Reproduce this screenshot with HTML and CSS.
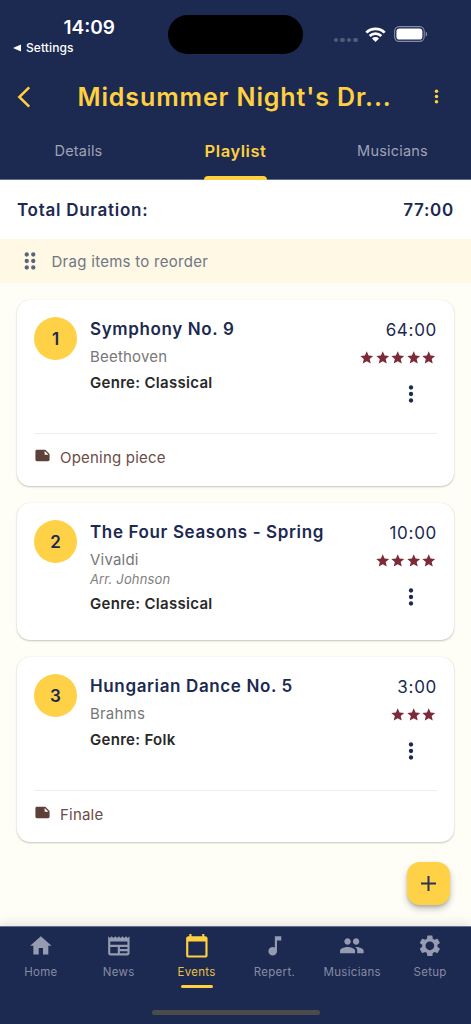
FILE: index.html
```html
<!DOCTYPE html>
<html lang="en">
<head>
<meta charset="utf-8">
<title>Playlist</title>
<link rel="stylesheet" href="styles.css">
</head>
<body>
<svg width="0" height="0" class="defs">
  <symbol id="star" viewBox="0 0 24 24"><path d="M12 17.27L18.18 21l-1.64-7.03L22 9.24l-7.19-.61L12 2 9.19 8.63 2 9.24l5.46 4.73L5.82 21z"/></symbol>
  <symbol id="more" viewBox="0 0 24 24"><circle cx="12" cy="6" r="2"/><circle cx="12" cy="12" r="2"/><circle cx="12" cy="18" r="2"/></symbol>
  <symbol id="note" viewBox="0 0 24 24"><path d="M22 10l-6-6H4c-1.1 0-2 .9-2 2v12.01c0 1.1.9 1.99 2 1.99l16-.01c1.1 0 2-.89 2-1.99v-8zm-7-4.5l5.5 5.5H15V5.5z"/></symbol>
</svg>
<div class="screen">
  <header class="header">
    <div class="status">
      <div class="status-left">
        <div class="clock">14:09</div>
        <div class="return"><svg width="8" height="8" viewBox="0 0 8 8"><path d="M0 4L8 .4v7.2z"/></svg><span>Settings</span></div>
      </div>
      <div class="island"></div>
      <div class="status-right">
        <div class="signal"><i></i><i></i><i></i><i></i></div>
        <svg class="wifi" width="21" height="15" viewBox="0 0 21 15"><g fill="none" stroke="#fff" stroke-width="2.7"><path d="M1.3 5.6a13 13 0 0 1 18.4 0"/><path d="M4.7 9a8.3 8.3 0 0 1 11.6 0"/></g><path fill="#fff" d="M7 11.4a5 5 0 0 1 7 0L10.5 15z"/></svg>
        <svg class="battery" width="34" height="16" viewBox="0 0 34 16"><rect x=".6" y=".6" width="29.6" height="14.8" rx="4.6" fill="none" stroke="#848da6" stroke-width="1.1"/><rect x="2.4" y="2.4" width="26" height="11.2" rx="3.2" fill="#fff"/><path d="M31.6 5.4c2 .8 2 4.4 0 5.2z" fill="#848da6"/></svg>
      </div>
    </div>
    <div class="appbar">
      <svg class="back" width="14" height="22" viewBox="0 0 14 22"><path d="M12.2 1.3L2.3 11l9.9 9.7" fill="none" stroke="#ffd03f" stroke-width="2.5"/></svg>
      <h1 class="title">Midsummer Night's Dr...</h1>
      <svg class="menu" width="21" height="21"><use href="#more"/></svg>
    </div>
    <nav class="tabs">
      <div class="tab">Details</div>
      <div class="tab active"><span>Playlist</span><i class="indicator"></i></div>
      <div class="tab musicians">Musicians</div>
    </nav>
  </header>
  <section class="total"><span class="total-label">Total Duration:</span><span class="total-time">77:00</span></section>
  <section class="hint">
    <svg width="26" height="26" viewBox="0 0 24 24"><circle cx="9" cy="6" r="2"/><circle cx="15" cy="6" r="2"/><circle cx="9" cy="12" r="2"/><circle cx="15" cy="12" r="2"/><circle cx="9" cy="18" r="2"/><circle cx="15" cy="18" r="2"/></svg>
    <span>Drag items to reorder</span>
  </section>
  <main class="list">
    <article class="card tall">
      <div class="row">
        <div class="badge">1</div>
        <div class="info"><h2>Symphony No. 9</h2><p class="composer">Beethoven</p><p class="genre">Genre: Classical</p></div>
        <div class="side"><div class="time">64:00</div><div class="stars"><svg><use href="#star"/></svg><svg><use href="#star"/></svg><svg><use href="#star"/></svg><svg><use href="#star"/></svg><svg><use href="#star"/></svg></div><svg class="more"><use href="#more"/></svg></div>
      </div>
      <div class="note"><svg><use href="#note"/></svg><span>Opening piece</span></div>
    </article>
    <article class="card short">
      <div class="row">
        <div class="badge">2</div>
        <div class="info"><h2>The Four Seasons - Spring</h2><p class="composer">Vivaldi</p><p class="arranger">Arr. Johnson</p><p class="genre">Genre: Classical</p></div>
        <div class="side"><div class="time">10:00</div><div class="stars"><svg><use href="#star"/></svg><svg><use href="#star"/></svg><svg><use href="#star"/></svg><svg><use href="#star"/></svg></div><svg class="more"><use href="#more"/></svg></div>
      </div>
    </article>
    <article class="card tall">
      <div class="row">
        <div class="badge">3</div>
        <div class="info"><h2>Hungarian Dance No. 5</h2><p class="composer">Brahms</p><p class="genre">Genre: Folk</p></div>
        <div class="side"><div class="time">3:00</div><div class="stars"><svg><use href="#star"/></svg><svg><use href="#star"/></svg><svg><use href="#star"/></svg></div><svg class="more"><use href="#more"/></svg></div>
      </div>
      <div class="note"><svg><use href="#note"/></svg><span>Finale</span></div>
    </article>
  </main>
  <button class="fab" aria-label="Add"><svg width="15" height="15" viewBox="0 0 15 15"><path d="M7.5 0v15M0 7.5h15" stroke="#2c3350" stroke-width="2"/></svg></button>
  <footer class="bottom">
    <nav class="nav">
      <div class="item"><svg viewBox="0 0 24 24"><path d="M10 20v-6h4v6h5v-8h3L12 3 2 12h3v8z"/></svg><span>Home</span></div>
      <div class="item"><svg viewBox="0 0 24 24"><path d="M22 3l-1.67 1.67L18.67 3 17 4.67 15.33 3l-1.66 1.67L12 3l-1.67 1.67L8.67 3 7 4.67 5.33 3 3.67 4.67 2 3v16c0 1.1.9 2 2 2h16c1.1 0 2-.9 2-2V3zM11 19H4v-6h7v6zm9 0h-7v-2h7v2zm0-4h-7v-2h7v2zm0-4H4V8h16v3z"/></svg><span>News</span></div>
      <div class="item selected"><svg viewBox="0 0 24 24"><path d="M20 3h-1V1h-2v2H7V1H5v2H4c-1.1 0-2 .9-2 2v16c0 1.1.9 2 2 2h16c1.1 0 2-.9 2-2V5c0-1.1-.9-2-2-2zm0 18H4V8h16v13z"/></svg><span>Events</span><i class="bar"></i></div>
      <div class="item"><svg viewBox="0 0 24 24"><path d="M12 3v10.55c-.59-.34-1.27-.55-2-.55-2.21 0-4 1.79-4 4s1.79 4 4 4 4-1.79 4-4V7h4V3h-6z"/></svg><span>Repert.</span></div>
      <div class="item"><svg viewBox="0 0 24 24"><path d="M16 11c1.66 0 2.99-1.34 2.99-3S17.66 5 16 5c-1.66 0-3 1.34-3 3s1.34 3 3 3zm-8 0c1.66 0 2.99-1.34 2.99-3S9.66 5 8 5C6.34 5 5 6.34 5 8s1.34 3 3 3zm0 2c-2.33 0-7 1.17-7 3.5V19h14v-2.5c0-2.33-4.67-3.5-7-3.5zm8 0c-.29 0-.62.02-.97.05 1.16.84 1.97 1.97 1.97 3.45V19h6v-2.5c0-2.33-4.67-3.5-7-3.5z"/></svg><span>Musicians</span></div>
      <div class="item"><svg viewBox="0 0 24 24"><path d="M19.14 12.94c.04-.3.06-.61.06-.94 0-.32-.02-.64-.07-.94l2.03-1.58c.18-.14.23-.41.12-.61l-1.92-3.32c-.12-.22-.37-.29-.59-.22l-2.39.96c-.5-.38-1.03-.7-1.62-.94l-.36-2.54c-.04-.24-.24-.41-.48-.41h-3.84c-.24 0-.43.17-.47.41l-.36 2.54c-.59.24-1.13.57-1.62.94l-2.39-.96c-.22-.08-.47 0-.59.22L2.74 8.87c-.12.21-.08.47.12.61l2.03 1.58c-.05.3-.09.63-.09.94s.02.64.07.94l-2.03 1.58c-.18.14-.23.41-.12.61l1.92 3.32c.12.22.37.29.59.22l2.39-.96c.5.38 1.03.7 1.62.94l.36 2.54c.05.24.24.41.48.41h3.84c.24 0 .44-.17.47-.41l.36-2.54c.59-.24 1.13-.56 1.62-.94l2.39.96c.22.08.47 0 .59-.22l1.92-3.32c.12-.22.07-.47-.12-.61l-2.01-1.58zM12 16.1c-2.26 0-4.1-1.84-4.1-4.1s1.84-4.1 4.1-4.1 4.1 1.84 4.1 4.1-1.84 4.1-4.1 4.1z"/></svg><span>Setup</span></div>
    </nav>
    <div class="home-bar"></div>
  </footer>
</div>
</body>
</html>
```

FILE: styles.css
```css
* { box-sizing: border-box; margin: 0; padding: 0; }
body { font-family: Inter, "Liberation Sans", sans-serif; background: #fffef6; color: #1c2951; }
.defs { position: absolute; }
svg { display: block; flex: none; }
.screen { width: 471px; height: 1024px; display: flex; flex-direction: column; position: relative; overflow: hidden; }

.header { height: 180px; flex: none; background: linear-gradient(#1c2951 179px, #646d8b 179px); display: flex; flex-direction: column; }
.status { height: 69px; flex: none; display: grid; grid-template-columns: 168px 135px 1fr; color: #fff; }
.status-left { padding-top: 15px; }
.clock { font-size: 19px; line-height: 25px; font-weight: 600; padding-left: 63.5px; letter-spacing: 0; }
.return { display: flex; align-items: center; gap: 5px; padding-left: 13px; font-size: 12px; line-height: 15px; font-weight: 500; letter-spacing: .1px; }
.return path { fill: #fff; }
.island { height: 39px; margin-top: 15px; border-radius: 20px; background: #000; }
.status-right { display: flex; align-items: flex-start; padding: 26px 0 0 31px; }
.signal { display: flex; gap: 2.3px; padding-top: 12px; margin-right: 7px; }
.signal i { width: 4.2px; height: 4.2px; border-radius: 50%; background: #525c7c; }
.wifi { margin-top: 1px; margin-right: 8px; }
.appbar { height: 55px; flex: none; display: flex; align-items: center; padding: 0 24px 0 17px; }
.back { margin-right: 46.5px; }
.title { flex: 1; font-size: 25px; line-height: 32px; font-weight: 600; color: #ffd03f; letter-spacing: .88px; white-space: nowrap; }
.menu { fill: #ffd03f; }
.tabs { flex: 1; display: grid; grid-template-columns: repeat(3, 1fr); }
.tab { display: flex; justify-content: center; font-size: 14.5px; line-height: 54px; color: #9ea4b5; letter-spacing: .2px; }
.tab.active { flex-direction: column; align-items: center; justify-content: space-between; color: #ffd03f; font-weight: 600; font-size: 16.5px; letter-spacing: .55px; }
.tab.active span { height: 52px; }
.indicator { width: 63px; height: 4px; border-radius: 4px 4px 0 0; background: #ffd03f; }

.total { height: 59px; flex: none; background: #fff; display: flex; justify-content: space-between; align-items: center; padding: 0 17px; font-size: 17px; font-weight: 600; letter-spacing: .72px; }
.hint { height: 44px; flex: none; background: #fff8e4; display: flex; align-items: center; padding-left: 17px; gap: 8.5px; font-size: 15px; color: #707686; letter-spacing: .28px; }
.hint svg { fill: #5c6580; }

.list { padding: 17px; display: flex; flex-direction: column; gap: 17px; }
.card { background: #fff; border-radius: 13px; padding: 17px; box-shadow: 0 1px 2px rgba(0,0,0,.22), 0 0 1px rgba(0,0,0,.12); }
.tall { height: 185.5px; }
.short { height: 137px; }
.row { display: flex; height: 116px; }
.badge { width: 43px; height: 43px; border-radius: 50%; background: #ffd147; font-size: 17px; font-weight: 600; line-height: 44px; text-align: center; flex: none; margin-right: 13px; }
.info { flex: 1; white-space: nowrap; }
.info h2 { font-size: 17px; line-height: 25.8px; font-weight: 600; letter-spacing: .63px; }
.composer { font-size: 15px; line-height: 20px; color: #777; letter-spacing: .2px; margin-top: 4.4px; }
.genre { font-size: 15px; line-height: 20px; font-weight: 600; color: #282828; letter-spacing: .3px; margin-top: 6px; }
.arranger { font-size: 13px; line-height: 18px; font-style: italic; color: #808080; letter-spacing: .15px; }
.side { display: flex; flex-direction: column; align-items: flex-end; }
.time { font-size: 17px; line-height: 27px; letter-spacing: .7px; }
.stars { display: flex; margin: 6px .5px 0 0; }
.stars svg { width: 15.5px; height: 15.5px; fill: #7d2a38; }
.more { width: 26px; height: 26px; fill: #1c2951; margin: 15.5px 13px 0 0; }
.note { border-top: 1px solid #eee; padding-top: 12px; display: flex; gap: 9px; font-size: 15px; line-height: 24px; color: #6b4d46; letter-spacing: .2px; }
.note svg { width: 17px; height: 17px; margin-top: 1px; fill: #5d4037; }

.fab { position: absolute; left: 407px; top: 862px; width: 43px; height: 43px; border: 0; border-radius: 13px; background: #ffd147; display: flex; align-items: center; justify-content: center; box-shadow: 0 4px 7px rgba(0,0,0,.22), 0 2px 3px rgba(0,0,0,.14); }

.bottom { margin-top: auto; height: 98px; flex: none; background: #1c2951; border-top: 1px solid #69708a; box-shadow: 0 -2px 10px rgba(0,0,0,.12); display: flex; flex-direction: column; align-items: center; }
.nav { width: 467px; height: 83px; padding-top: 6px; display: grid; grid-template-columns: repeat(6, 1fr); }
.item { display: flex; flex-direction: column; align-items: center; color: #858ca2; font-size: 11.5px; line-height: 16px; letter-spacing: .3px; }
.item svg { width: 25.7px; height: 25.7px; margin-bottom: 5px; fill: #959bb0; }
.item.selected { color: #e8c044; }
.item.selected svg { fill: #ffd03f; }
.bar { width: 32px; height: 3.5px; border-radius: 2px; background: #ffd03f; margin-top: 5px; }
.home-bar { width: 168px; height: 5px; border-radius: 3px; background: #4b4b4b; }
```
